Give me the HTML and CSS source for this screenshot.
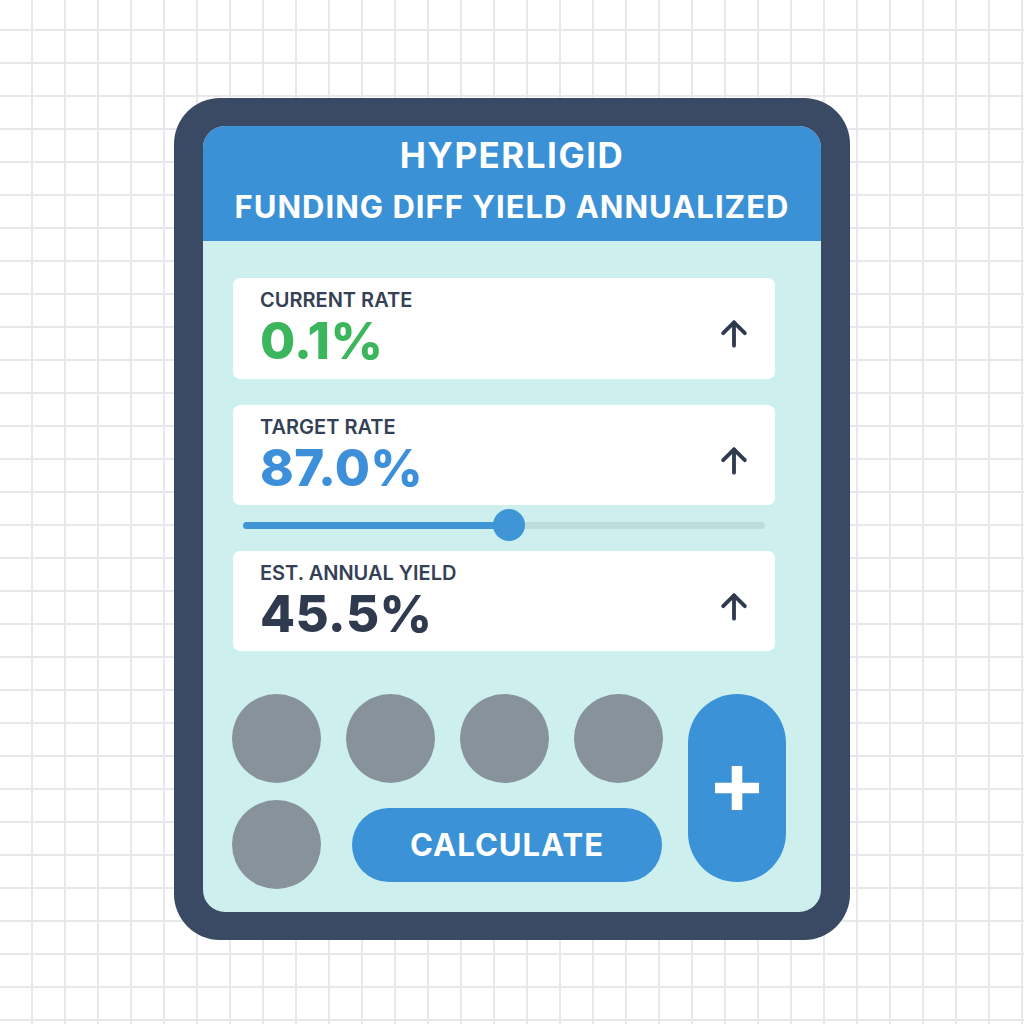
FILE: index.html
```html
<!doctype html>
<html lang="en">
  <head>
    <meta charset="UTF-8" />
    <meta name="viewport" content="width=device-width, initial-scale=1.0" />
    <title>Hyperligid Funding Diff Yield</title>
    <link rel="stylesheet" href="styles.css">
  </head>
  <body>
    <div class="device">
      <div class="screen">
        <header class="screen-header">
          <h1 class="brand">HYPERLIGID</h1>
          <h2 class="subtitle">FUNDING DIFF YIELD ANNUALIZED</h2>
        </header>

        <main class="screen-body">
          <!-- Tarjetas de tasas -->
          <div class="stat">
            <div class="stat-text">
              <p class="stat-label">CURRENT RATE</p>
              <p class="stat-value green">0.1%</p>
            </div>
            <svg class="stat-arrow" viewBox="0 0 24 24" fill="none" stroke="currentColor" stroke-width="2.3" stroke-linecap="round" stroke-linejoin="round">
              <path d="M5.5 11.5l6.5-6.5 6.5 6.5"/>
              <path d="M12 19V5"/>
            </svg>
          </div>

          <div class="stat">
            <div class="stat-text">
              <p class="stat-label">TARGET RATE</p>
              <p class="stat-value blue">87.0%</p>
            </div>
            <svg class="stat-arrow" viewBox="0 0 24 24" fill="none" stroke="currentColor" stroke-width="2.3" stroke-linecap="round" stroke-linejoin="round">
              <path d="M5.5 11.5l6.5-6.5 6.5 6.5"/>
              <path d="M12 19V5"/>
            </svg>
          </div>

          <div class="slider">
            <div class="slider-track">
              <div class="slider-fill" style="width: 51%"></div>
              <div class="slider-thumb" style="left: 51%"></div>
            </div>
          </div>

          <div class="stat">
            <div class="stat-text">
              <p class="stat-label">EST. ANNUAL YIELD</p>
              <p class="stat-value dark">45.5%</p>
            </div>
            <svg class="stat-arrow" viewBox="0 0 24 24" fill="none" stroke="currentColor" stroke-width="2.3" stroke-linecap="round" stroke-linejoin="round">
              <path d="M5.5 11.5l6.5-6.5 6.5 6.5"/>
              <path d="M12 19V5"/>
            </svg>
          </div>

          <!-- Teclado -->
          <div class="keypad">
            <button class="key"></button>
            <button class="key"></button>
            <button class="key"></button>
            <button class="key"></button>
            <button class="key-plus">
              <svg viewBox="0 0 48 48" fill="none" stroke="currentColor" stroke-width="11">
                <path d="M24 1v46M1 24h46"/>
              </svg>
            </button>
            <button class="key"></button>
            <button class="calc-btn">CALCULATE</button>
          </div>
        </main>
      </div>
    </div>
  </body>
</html>
```

FILE: styles.css
```css
* {
  margin: 0;
  padding: 0;
  box-sizing: border-box;
}

body {
  font-family: Inter, "Noto Sans", sans-serif;
  height: 1024px;
  display: flex;
  justify-content: center;
  align-items: flex-start;
  padding-top: 98px;
  background-color: #ffffff;
  background-image:
    linear-gradient(to right, transparent 31px, #e6e8ec 31px, #e6e8ec 33px),
    linear-gradient(to bottom, transparent 31px, #e6e8ec 31px, #e6e8ec 33px);
  background-size: 33px 33px;
  background-position: 0 -2px;
  overflow: hidden;
}

/* Marco del dispositivo */
.device {
  width: 676px;
  padding: 28px 29px;
  background: #3a4a64;
  border-radius: 46px;
}

.screen {
  background: #cdf0ef;
  border-radius: 22px;
  overflow: hidden;
}

.screen-header {
  height: 115px;
  padding-top: 9px;
  background: #3b91d5;
  color: #ffffff;
  text-align: center;
}

.brand {
  font-size: 35px;
  font-weight: 700;
  line-height: 40px;
  letter-spacing: 1.5px;
}

.subtitle {
  margin-top: 12px;
  font-size: 31px;
  font-weight: 700;
  line-height: 40px;
  letter-spacing: 1px;
}

.screen-body {
  padding: 37px 46px 23px 30px;
}

/* Tarjetas */
.stat {
  height: 100px;
  padding: 10px 21px 0 27px;
  background: #ffffff;
  border-radius: 7px;
  display: flex;
  justify-content: space-between;
  align-items: flex-start;
  margin-bottom: 26px;
}

.stat:first-child {
  height: 101px;
}

.stat-label {
  font-size: 20px;
  font-weight: 600;
  line-height: 24px;
  color: #344055;
}

.stat-value {
  margin-top: 4px;
  font-size: 51px;
  font-weight: 800;
  line-height: 50px;
  letter-spacing: 0.3px;
}

.green { color: #3cb65c; }
.blue { color: #3d8fd9; }
.dark { color: #2f3a4f; }

.stat-arrow {
  width: 40px;
  height: 40px;
  margin-top: 26px;
  color: #2f3a4f;
}

/* Slider */
.slider {
  height: 40px;
  margin-top: -26px;
  margin-bottom: 6px;
  padding: 0 10px;
  display: flex;
  align-items: center;
}

.slider-track {
  position: relative;
  width: 100%;
  height: 7px;
  border-radius: 4px;
  background: #bfdcdc;
}

.slider-fill {
  height: 100%;
  border-radius: 4px;
  background: #3f95d6;
}

.slider-thumb {
  position: absolute;
  top: 50%;
  width: 32px;
  height: 32px;
  border-radius: 50%;
  background: #3f95d6;
  transform: translate(-50%, -50%);
}

/* Teclado */
.keypad {
  margin: 43px -12px 0 -1px;
  display: grid;
  grid-template-columns: 89px 89px 89px 89px 98px;
  grid-template-rows: 89px 89px;
  column-gap: 25px;
  row-gap: 17px;
}

.keypad button {
  border: none;
  font-family: inherit;
}

.key {
  width: 89px;
  height: 89px;
  border-radius: 50%;
  background: #87929b;
}

.key-plus {
  grid-column: 5;
  grid-row: 1 / 3;
  height: 188px;
  border-radius: 49px;
  background: #3b92d6;
  color: #ffffff;
  display: flex;
  align-items: center;
  justify-content: center;
}

.key-plus svg {
  width: 46px;
  height: 46px;
}

.calc-btn {
  grid-column: 2 / 5;
  grid-row: 2;
  align-self: center;
  height: 74px;
  margin: 0 1px 0 6px;
  border-radius: 37px;
  background: #3b92d6;
  color: #ffffff;
  font-size: 31px;
  font-weight: 700;
  letter-spacing: 1px;
}
```
